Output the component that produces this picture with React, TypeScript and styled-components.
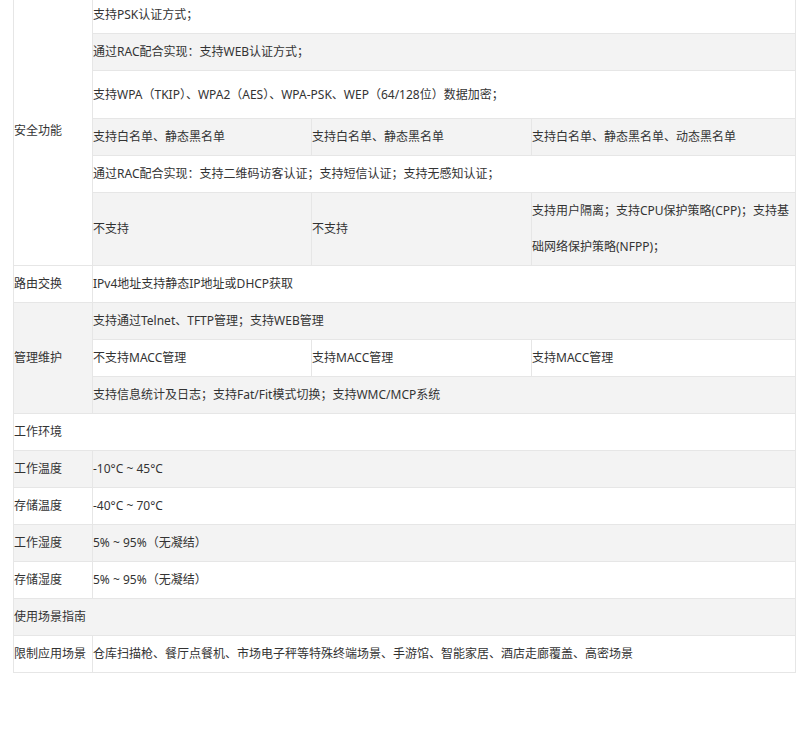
import React from "react";
import styled, { createGlobalStyle } from "styled-components";

const Global = createGlobalStyle`
  html, body { margin: 0; padding: 0; background: #fff; }
  body {
    font-family: "Noto Sans", "Noto Sans CJK SC", sans-serif;
    font-size: 12px;
    color: #333;
    overflow: hidden;
  }
`;

const Page = styled.div`
  padding: 0 0 0 13px;
  height: 743px;
  overflow: hidden;
`;

const Table = styled.table`
  width: 783px;
  margin-top: -4px;
  border-collapse: collapse;
  table-layout: fixed;
  border: 1px solid #e6e6e6;
`;

const Col = styled.col<{ $w: number }>`
  width: ${(p) => p.$w}px;
`;

const Row = styled.tr`
  &:nth-child(even) {
    background: #f3f3f3;
  }
`;

const Cell = styled.td<{ $tall?: boolean }>`
  border: 1px solid #e6e6e6;
  padding: 0;
  line-height: 36px;
  height: ${(p) => (p.$tall ? "47px" : "36px")};
  vertical-align: middle;
  font-size: 12px;
  color: #333;
  white-space: normal;
  word-break: break-all;
`;

type C = { t: string; span?: number; rows?: number };
type R = { cells: C[]; tall?: boolean };

const widths = [79, 219, 220, 264];

const data: R[] = [
  { cells: [{ t: "安全功能", rows: 6 }, { t: "支持PSK认证方式；", span: 3 }] },
  { cells: [{ t: "通过RAC配合实现：支持WEB认证方式；", span: 3 }] },
  {
    cells: [{ t: "支持WPA（TKIP）、WPA2（AES）、WPA-PSK、WEP（64/128位）数据加密；", span: 3 }],
    tall: true,
  },
  {
    cells: [
      { t: "支持白名单、静态黑名单" },
      { t: "支持白名单、静态黑名单" },
      { t: "支持白名单、静态黑名单、动态黑名单" },
    ],
  },
  { cells: [{ t: "通过RAC配合实现：支持二维码访客认证；支持短信认证；支持无感知认证；", span: 3 }] },
  {
    cells: [
      { t: "不支持" },
      { t: "不支持" },
      { t: "支持用户隔离；支持CPU保护策略(CPP)；支持基础网络保护策略(NFPP)；" },
    ],
  },
  { cells: [{ t: "路由交换" }, { t: "IPv4地址支持静态IP地址或DHCP获取", span: 3 }] },
  { cells: [{ t: "管理维护", rows: 3 }, { t: "支持通过Telnet、TFTP管理；支持WEB管理", span: 3 }] },
  { cells: [{ t: "不支持MACC管理" }, { t: "支持MACC管理" }, { t: "支持MACC管理" }] },
  { cells: [{ t: "支持信息统计及日志；支持Fat/Fit模式切换；支持WMC/MCP系统", span: 3 }] },
  { cells: [{ t: "工作环境", span: 4 }] },
  { cells: [{ t: "工作温度" }, { t: "-10°C ~ 45°C", span: 3 }] },
  { cells: [{ t: "存储温度" }, { t: "-40°C ~ 70°C", span: 3 }] },
  { cells: [{ t: "工作湿度" }, { t: "5% ~ 95%（无凝结）", span: 3 }] },
  { cells: [{ t: "存储湿度" }, { t: "5% ~ 95%（无凝结）", span: 3 }] },
  { cells: [{ t: "使用场景指南", span: 4 }] },
  {
    cells: [
      { t: "限制应用场景" },
      { t: "仓库扫描枪、餐厅点餐机、市场电子秤等特殊终端场景、手游馆、智能家居、酒店走廊覆盖、高密场景", span: 3 },
    ],
  },
];

export default function App() {
  return (
    <>
      <Global />
      <Page>
        <Table>
          <colgroup>
            {widths.map((w, i) => (
              <Col key={i} $w={w} />
            ))}
          </colgroup>
          <tbody>
            {data.map((r, i) => (
              <Row key={i}>
                {r.cells.map((c, j) => (
                  <Cell key={j} colSpan={c.span} rowSpan={c.rows} $tall={r.tall}>
                    {c.t}
                  </Cell>
                ))}
              </Row>
            ))}
          </tbody>
        </Table>
      </Page>
    </>
  );
}
